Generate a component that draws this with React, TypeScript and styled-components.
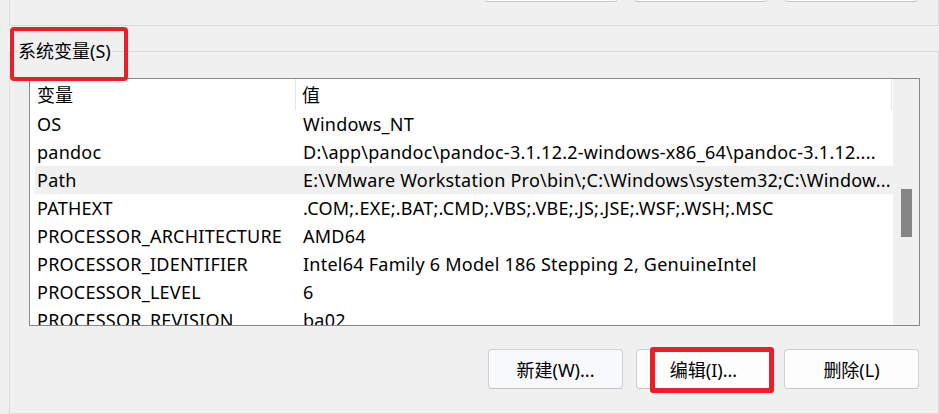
import React from "react";
import styled, { createGlobalStyle } from "styled-components";

const GlobalStyle = createGlobalStyle`
  html, body {
    margin: 0;
    padding: 0;
    background: #f0f0f0;
  }
  body {
    font-family: "Noto Sans", "Noto Sans CJK SC", sans-serif;
    font-size: 18px;
    color: #000;
  }
`;

const Page = styled.div`
  width: 939px;
  height: 414px;
  overflow: hidden;
`;

const PrevGroup = styled.div`
  box-sizing: border-box;
  margin-left: 9px;
  width: 930px;
  height: 26px;
  border: 1px solid #dcdcdc;
  border-top: none;
  overflow: hidden;
`;

const ButtonRow = styled.div<{ $offset?: number }>`
  display: flex;
  justify-content: flex-end;
  gap: 16px;
  margin-top: ${(p) => p.$offset ?? 0}px;
  padding-right: 20px;
`;

const Button = styled.button<{ $primary?: boolean; $marked?: boolean }>`
  position: relative;
  box-sizing: border-box;
  width: 134px;
  height: 40px;
  border: 1px solid #d0d0d0;
  border-bottom-color: #c4c4c4;
  border-radius: 4px;
  background: ${(p) => (p.$primary ? "#f8f9fc" : "#fdfdfd")};
  font: inherit;
  font-size: 18px;
  color: #000;
  padding: 0;

  &::after {
    content: "";
    display: ${(p) => (p.$marked ? "block" : "none")};
    position: absolute;
    top: -3px;
    left: 13px;
    right: -4px;
    bottom: -5px;
    border: 5px solid #ec1f28;
    border-radius: 3px;
  }
`;

const Group = styled.fieldset`
  box-sizing: border-box;
  margin: 13px 0 0 9px;
  width: 930px;
  height: 375px;
  border: 1px solid #dcdcdc;
  padding: 15px 18px 0 19px;
  min-width: 0;
`;

const Legend = styled.legend`
  position: relative;
  padding: 0 1px;
  margin-left: -12px;
  line-height: 24px;

  &::after {
    content: "";
    position: absolute;
    top: -12px;
    left: -7px;
    right: -16px;
    bottom: -18px;
    border: 4px solid #ec1f28;
    border-radius: 4px;
  }
`;

const ListBox = styled.div`
  box-sizing: border-box;
  height: 248px;
  border: 1px solid #828790;
  background: #fff;
  display: grid;
  grid-template-columns: 1fr 26px;
  overflow: hidden;
`;

const ListMain = styled.div`
  display: flex;
  flex-direction: column;
  min-width: 0;
`;

const Header = styled.div`
  display: grid;
  grid-template-columns: 266px 1fr;
  height: 31px;
  margin-right: 1px;
  align-items: stretch;
`;

const HeaderCell = styled.div<{ $pad: number }>`
  display: flex;
  align-items: center;
  padding-left: ${(p) => p.$pad}px;
  border-right: 1px solid #e5e5e5;
  line-height: 24px;
`;

const Rows = styled.div`
  flex: 1;
  overflow: hidden;
`;

const Row = styled.div<{ $selected?: boolean }>`
  display: grid;
  grid-template-columns: 266px 1fr;
  height: 28px;
  align-items: center;
  margin-left: 5px;
  background: ${(p) => (p.$selected ? "#f0f0f0" : "transparent")};
`;

const Cell = styled.div`
  padding-left: 2px;
  white-space: nowrap;
  overflow: hidden;
  line-height: 28px;
  letter-spacing: 0.24px;
`;

const ScrollTrack = styled.div`
  background: #f0f0f0;
  padding-top: 110px;
  display: flex;
  justify-content: center;
`;

const Thumb = styled.div`
  width: 11px;
  height: 48px;
  background: #858585;
`;

const BottomRow = styled(ButtonRow)`
  margin-top: 23px;
  gap: 13px;
  padding-right: 1px;

  & > button {
    width: 135px;
  }
`;

const rows: [string, string][] = [
  ["OS", "Windows_NT"],
  ["pandoc", "D:\\app\\pandoc\\pandoc-3.1.12.2-windows-x86_64\\pandoc-3.1.12...."],
  ["Path", "E:\\VMware Workstation Pro\\bin\\;C:\\Windows\\system32;C:\\Window..."],
  ["PATHEXT", ".COM;.EXE;.BAT;.CMD;.VBS;.VBE;.JS;.JSE;.WSF;.WSH;.MSC"],
  ["PROCESSOR_ARCHITECTURE", "AMD64"],
  ["PROCESSOR_IDENTIFIER", "Intel64 Family 6 Model 186 Stepping 2, GenuineIntel"],
  ["PROCESSOR_LEVEL", "6"],
  ["PROCESSOR_REVISION", "ba02"],
];

export default function App() {
  return (
    <Page>
      <GlobalStyle />
      <PrevGroup>
        <ButtonRow $offset={-38}>
          <Button aria-label="新建" />
          <Button aria-label="编辑" />
          <Button aria-label="删除" />
        </ButtonRow>
      </PrevGroup>
      <Group>
        <Legend>系统变量(S)</Legend>
        <ListBox>
          <ListMain>
            <Header>
              <HeaderCell $pad={7}>变量</HeaderCell>
              <HeaderCell $pad={6}>值</HeaderCell>
            </Header>
            <Rows>
              {rows.map(([name, value]) => (
                <Row key={name} $selected={name === "Path"}>
                  <Cell>{name}</Cell>
                  <Cell>{value}</Cell>
                </Row>
              ))}
            </Rows>
          </ListMain>
          <ScrollTrack>
            <Thumb />
          </ScrollTrack>
        </ListBox>
        <BottomRow>
          <Button $primary>新建(W)...</Button>
          <Button $marked>编辑(I)...</Button>
          <Button>删除(L)</Button>
        </BottomRow>
      </Group>
    </Page>
  );
}
